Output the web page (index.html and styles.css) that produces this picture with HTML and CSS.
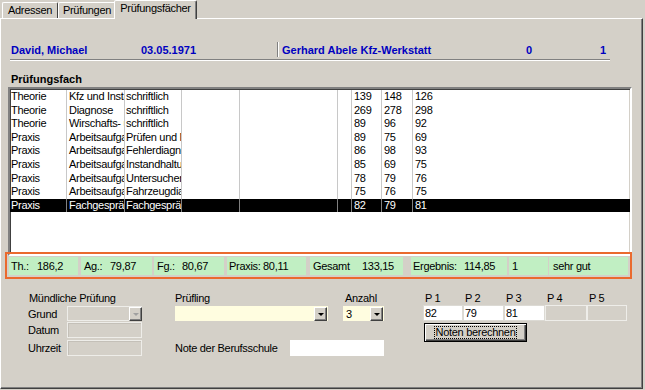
FILE: index.html
```html
<!DOCTYPE html>
<html>
<head>
	<meta charset="utf-8">
	<title>Prüfungsfächer</title>
	<link rel="stylesheet" href="styles.css">
</head>
<body>
	<div class="tabs">
		<div class="tab t1">Adressen</div>
		<div class="tab t2">Prüfungen</div>
		<div class="tab active">Prüfungsfächer</div>
	</div>
	<div class="panel">
		<div class="header">
			<span class="h-name">David, Michael</span>
			<span class="h-date">03.05.1971</span>
			<span class="h-sep"></span>
			<span class="h-firm">Gerhard Abele Kfz-Werkstatt</span>
			<span class="h-a">0</span>
			<span class="h-b">1</span>
		</div>
		<div class="rule"></div>
		<div class="title">Prüfungsfach</div>

		<div class="list">
			<div class="row"><span>Theorie</span><span>Kfz und Instandsetzung</span><span>schriftlich</span><span></span><span></span><span></span><span>139</span><span>148</span><span>126</span></div>
			<div class="row"><span>Theorie</span><span>Diagnose</span><span>schriftlich</span><span></span><span></span><span></span><span>269</span><span>278</span><span>298</span></div>
			<div class="row"><span>Theorie</span><span>Wirschafts- und Sozialkunde</span><span>schriftlich</span><span></span><span></span><span></span><span>89</span><span>96</span><span>92</span></div>
			<div class="row"><span>Praxis</span><span>Arbeitsaufgabe</span><span>Prüfen und Messen</span><span></span><span></span><span></span><span>89</span><span>75</span><span>69</span></div>
			<div class="row"><span>Praxis</span><span>Arbeitsaufgabe</span><span>Fehlerdiagnose</span><span></span><span></span><span></span><span>86</span><span>98</span><span>93</span></div>
			<div class="row"><span>Praxis</span><span>Arbeitsaufgabe</span><span>Instandhaltung</span><span></span><span></span><span></span><span>85</span><span>69</span><span>75</span></div>
			<div class="row"><span>Praxis</span><span>Arbeitsaufgabe</span><span>Untersuchen</span><span></span><span></span><span></span><span>78</span><span>79</span><span>76</span></div>
			<div class="row"><span>Praxis</span><span>Arbeitsaufgabe</span><span>Fahrzeugdiagnose</span><span></span><span></span><span></span><span>75</span><span>76</span><span>75</span></div>
			<div class="row selected"><span>Praxis</span><span>Fachgespräch</span><span>Fachgespräch</span><span></span><span></span><span></span><span>82</span><span>79</span><span>81</span></div>
		</div>

		<div class="status">
			<div class="cell c-th"><span class="lbl">Th.:</span>186,2</div>
			<div class="cell c-ag"><span class="lbl">Ag.:</span>79,87</div>
			<div class="cell c-fg"><span class="lbl">Fg.:</span>80,67</div>
			<div class="cell c-pr"><span class="lbl">Praxis:</span>80,11</div>
			<div class="cell c-ge"><span class="lbl">Gesamt</span>133,15</div>
			<div class="cell c-er"><span class="lbl">Ergebnis:</span>114,85</div>
			<div class="cell c-no">1</div>
			<div class="cell c-tx">sehr gut</div>
		</div>

		<div class="form">
			<div class="f-head">Mündliche Prüfung</div>
			<div class="f-lbl r2">Grund</div>
			<div class="combo disabled r2 cb"><span class="val"></span><span class="drop"></span></div>
			<div class="f-lbl r3">Datum</div>
			<div class="field off r3 cb"></div>
			<div class="f-lbl r4">Uhrzeit</div>
			<div class="field off r4 cb"></div>

			<div class="f-lbl r1 cc">Prüfling</div>
			<div class="combo yellow r2 cc"><span class="val"></span><span class="drop"></span></div>
			<div class="f-lbl r4 cc">Note der Berufsschule</div>
			<div class="field white r4 note"></div>

			<div class="f-lbl r1 cd anz">Anzahl</div>
			<div class="combo yellow r2 cd"><span class="val">3</span><span class="drop"></span></div>

			<div class="pgrid">
				<div class="p-lbl">P 1</div>
				<div class="p-lbl">P 2</div>
				<div class="p-lbl">P 3</div>
				<div class="p-lbl">P 4</div>
				<div class="p-lbl">P 5</div>
				<div class="p-in">82</div>
				<div class="p-in">79</div>
				<div class="p-in">81</div>
				<div class="p-in off"></div>
				<div class="p-in off"></div>
				<div class="btn"><span>Noten berechnen</span></div>
			</div>
		</div>
	</div>
</body>
</html>
```

FILE: styles.css
```css
* {
	padding: 0;
	margin: 0;
	box-sizing: border-box;
}
html, body {
	width: 100%;
	height: 100%;
	background: #d4d0c8;
	font-family: "Liberation Sans", Arial, sans-serif;
	font-size: 11px;
	line-height: 14px;
	letter-spacing: -0.3px;
	color: #000;
	overflow: hidden;
}
/* tabs */
.tabs {
	display: flex;
	align-items: flex-end;
	height: 18px;
	padding-left: 2px;
}
.tab {
	height: 16px;
	border: 1px solid;
	border-bottom: none;
	border-color: #fff #404040 transparent #fff;
	border-radius: 2px 2px 0 0;
	text-align: center;
	line-height: 15px;
}
.t1 { width: 56px; }
.t2 { width: 58px; }
.tab.active {
	position: relative;
	z-index: 1;
	width: 83px;
	height: 19px;
	margin-left: -2px;
	margin-bottom: -1px;
	background: #d4d0c8;
	line-height: 15px;
	box-shadow: inset -1px 0 #808080;
}
.panel {
	width: 643px;
	height: 371px;
	border: 1px solid;
	border-color: #fff #404040 #404040 #fff;
	box-shadow: inset -1px -1px #808080;
}
/* header */
.header {
	display: flex;
	margin: 24px 0 0 10px;
	font-weight: bold;
	letter-spacing: 0;
	color: #0000c0;
	height: 14px;
}
.h-name { width: 130px; }
.h-date { width: 136px; }
.h-sep {
	width: 2px;
	height: 15px;
	margin-top: -1px;
	border-left: 1px solid #808080;
	border-right: 1px solid #fff;
}
.h-firm { width: 247px; padding-left: 3px; }
.h-a { width: 74px; }
.rule {
	width: 600px;
	height: 2px;
	margin: 2px 0 0 9px;
	border-top: 1px solid #808080;
	border-bottom: 1px solid #fff;
}
.title {
	margin: 11px 0 0 10px;
	font-weight: bold;
	letter-spacing: 0;
}
/* list */
.list {
	width: 624px;
	height: 169px;
	margin: 1px 0 0 7px;
	background: #fff;
	border: 2px solid;
	border-color: #808080 #fff #fff #808080;
	box-shadow: inset 1px 1px #404040, inset -1px -1px #d4d0c8;
	padding-top: 1px;
}
.row {
	display: grid;
	grid-template-columns: 57px 58px 57px 58px 98px 14px 30px 31px 1fr;
	height: 13.6px;
	line-height: 13.6px;
}
.row span {
	overflow: hidden;
	white-space: nowrap;
	padding-left: 2px;
	border-right: 1px solid #c8c8c8;
}
.row span:first-child { padding-left: 1px; }
.row span:nth-child(3) { padding-left: 1px; }
.row span:last-child { border-right: none; }
.row.selected {
	background: #000;
	color: #fff;
}
.row.selected span { border-right-color: #808080; }
.row.selected span:last-child { border-right: none; }
/* status line */
.status {
	display: flex;
	width: 627px;
	height: 27px;
	margin: -4px 0 0 4px;
	padding: 3px 2px 2px 2px;
	border: 2px solid #ea6a2e;
}
.cell {
	height: 18px;
	line-height: 18px;
	background: #c1efc3;
	white-space: nowrap;
}
.lbl { display: inline-block; }
.c-th { width: 69px; padding-left: 2px; }
.c-th .lbl { width: 26px; }
.c-ag { width: 71px; margin-left: 3px; padding-left: 3px; }
.c-ag .lbl { width: 26px; }
.c-fg { width: 70px; margin-left: 2px; padding-left: 3px; }
.c-fg .lbl { width: 25px; }
.c-pr { width: 79px; margin-left: 3px; padding-left: 2px; }
.c-pr .lbl { width: 34px; }
.c-ge { width: 93px; margin-left: 4px; padding-left: 3px; }
.c-ge .lbl { width: 49px; }
.c-er { width: 96px; margin-left: 8px; padding-left: 2px; }
.c-er .lbl { width: 51px; }
.c-no { width: 39px; margin-left: 2px; padding-left: 3px; }
.c-tx { width: 79px; margin-left: 1px; padding-left: 4px; }
/* lower form */
.form {
	display: grid;
	grid-template-columns: 39px 75px 33px 153px 15px 41px 39px 204px;
	grid-template-rows: 13px 17px 17px 18px;
	margin: 13px 0 0 27px;
}
.f-head {
	grid-column: 1 / 4;
	grid-row: 1;
	line-height: 13px;
	padding-left: 1px;
}
.f-lbl {
	grid-column: 1;
	line-height: 16px;
	white-space: nowrap;
}
.r1 { grid-row: 1; line-height: 13px; }
.r2 { grid-row: 2; margin-top: 1px; }
.r3 { grid-row: 3; }
.r4 { grid-row: 4; margin-top: 1px; }
.cb { grid-column: 2; }
.cc { grid-column: 4; }
.cd { grid-column: 6; }
.anz { padding-left: 2px; }
.note {
	grid-column: 4 / 7;
	justify-self: end;
	width: 94px;
}
.field {
	height: 16px;
}
.field.off {
	border: 1px solid #eeede9;
	box-shadow: inset 1px 1px #c4c0b8;
}
.field.white {
	background: #fff;
}
.combo {
	display: flex;
	justify-content: space-between;
	height: 15px;
	padding: 1px 1px 0 0;
}
.combo .val {
	padding-left: 3px;
	line-height: 14px;
}
.combo.yellow { background: #fffde0; }
.combo.disabled {
	border: 1px solid #eeede9;
	border-right: none;
	padding: 0 0 0 0;
}
.drop {
	display: flex;
	align-items: center;
	justify-content: center;
	width: 13px;
	height: 14px;
	background: #d4d0c8;
	border: 1px solid;
	border-color: #fff #404040 #404040 #fff;
	box-shadow: inset -1px -1px #808080;
}
.drop::after {
	content: '';
	border-left: 3px solid transparent;
	border-right: 3px solid transparent;
	border-top: 3px solid #000;
	margin-top: 1px;
}
.disabled .drop::after {
	border-top-color: #a0a0a0;
}
/* P fields */
.pgrid {
	grid-column: 8;
	grid-row: 1 / 4;
	display: grid;
	grid-template-columns: 40px 41px 41px 42px 40px;
	grid-template-rows: 13px 17px 17px;
}
.p-lbl {
	line-height: 13px;
	padding-left: 2px;
}
.p-in {
	height: 16px;
	background: #fff;
	border: 1px solid #dcdad4;
	line-height: 14px;
	padding-left: 1px;
}
.p-in.off {
	background: #d4d0c8;
	border-color: #eeede9;
}
.btn {
	grid-column: 1 / 4;
	grid-row: 3;
	width: 103px;
	height: 19px;
	margin: 1px 0 0 1px;
	border: 1px solid #000;
	box-shadow: inset 1px 1px #fff, inset -1px -1px #404040, inset -2px -2px #808080;
	display: flex;
	align-items: center;
	justify-content: center;
}
.btn span {
	border: 1px dotted #000;
	padding: 0 1px;
	line-height: 11px;
}
```
